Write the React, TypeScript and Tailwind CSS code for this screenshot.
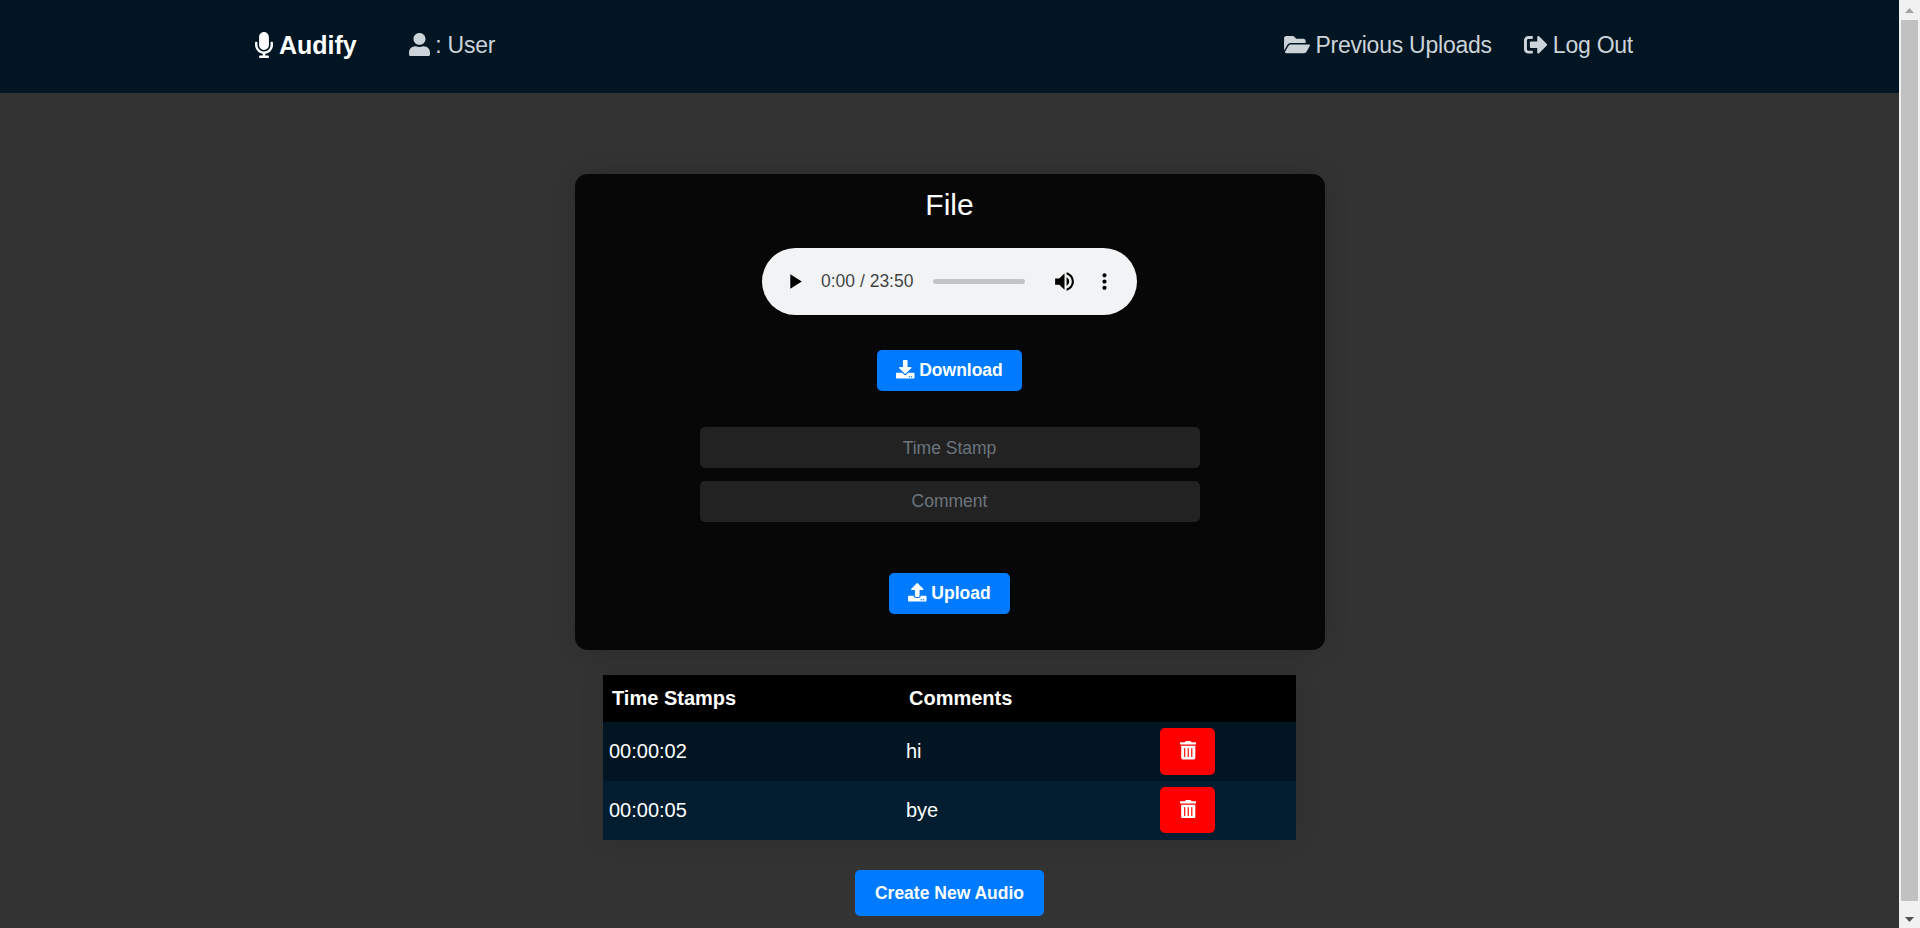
import type { ReactNode } from "react";
import {
  FaDownload,
  FaFolderOpen,
  FaMicrophone,
  FaSignOutAlt,
  FaTrashAlt,
  FaUpload,
  FaUser,
} from "react-icons/fa";

const rows = [
  { time: "00:00:02", comment: "hi", tone: "bg-[#011522]", button: "h-[47px]" },
  { time: "00:00:05", comment: "bye", tone: "bg-[#011d2f]", button: "mb-px h-[46px]" },
];

function Header() {
  return (
    <header className="flex h-[93px] shrink-0 items-start bg-[#011522] pt-[28px] pr-[266px] pl-[255px] text-[23px] leading-[34px] tracking-[-0.24px] text-[#ccd3d9]">
      <a className="flex items-center gap-[7px] text-[25px] font-bold tracking-normal text-white">
        <FaMicrophone className="h-[26px] w-[18px] shrink-0" preserveAspectRatio="none" />
        <span className="-ml-[1px]">Audify</span>
      </a>
      <a className="ml-[52.5px] flex items-center gap-[5px]">
        <FaUser className="-mt-px h-[23.5px] w-[21px]" preserveAspectRatio="none" />
        <span>: User</span>
      </a>
      <nav className="ml-auto flex gap-[32px]">
        <a className="flex items-center gap-[5px]">
          <FaFolderOpen className="-mt-[2px] h-[23px] w-[26px]" />
          <span>Previous Uploads</span>
        </a>
        <a className="flex items-center gap-[5.500px]">
          <FaSignOutAlt className="-mt-px size-[23.500px]" />
          <span>Log Out</span>
        </a>
      </nav>
    </header>
  );
}

function AudioPlayer() {
  return (
    <div className="mt-[30px] flex h-[67px] w-[375px] items-center rounded-[34px] bg-[#f1f3f4] pl-[20px] text-black">
      <svg viewBox="0 0 24 24" className="size-[25px] shrink-0 fill-current">
        <path d="M8 5v14l11-7z" />
      </svg>
      <span className="mb-[2px] ml-[14px] w-[92px] shrink-0 text-[17.5px] leading-[20px] whitespace-nowrap text-black/75">
        0:00 / 23:50
      </span>
      <div className="ml-[20px] h-[5px] w-[92px] shrink-0 rounded-full bg-[#c2c3c4]" />
      <svg viewBox="0 0 24 24" className="ml-[27px] size-[25px] shrink-0 fill-current">
        <path d="M3 9v6h4l5 5V4L7 9H3zm13.500 3c0-1.770-1.020-3.290-2.500-4.030v8.050c1.480-.73 2.500-2.250 2.500-4.020zM14 3.230v2.060c2.890.86 5 3.540 5 6.710s-2.110 5.850-5 6.710v2.060c4.010-.91 7-4.490 7-8.770s-2.990-7.860-7-8.770z" />
      </svg>
      <svg viewBox="0 0 24 24" className="ml-[15px] size-[25px] shrink-0 fill-current">
        <path d="M12 8c1.100 0 2-.9 2-2s-.9-2-2-2-2 .9-2 2 .9 2 2 2zm0 2c-1.100 0-2 .9-2 2s.9 2 2 2 2-.9 2-2-.9-2-2-2zm0 6c-1.100 0-2 .9-2 2s.9 2 2 2 2-.9 2-2-.9-2-2-2z" />
      </svg>
    </div>
  );
}

function Button({ className, children }: { className: string; children: ReactNode }) {
  return (
    <button
      className={`flex items-center justify-center gap-[4.500px] rounded-[5px] bg-[#007bff] text-[17.5px] font-bold text-white ${className}`}
    >
      {children}
    </button>
  );
}

function Field({ label, className }: { label: string; className: string }) {
  return (
    <input
      placeholder={label}
      className={`h-[41px] w-[500px] rounded-[5px] bg-[#222] text-center text-[17.5px] text-white placeholder:text-[#6c757d] placeholder:opacity-100 ${className}`}
    />
  );
}

function Scrollbar() {
  return (
    <div className="flex w-[21px] shrink-0 flex-col items-center bg-[#f1f1f1]">
      <div className="flex h-[20px] items-center justify-center">
        <svg viewBox="0 0 9 5" className="h-[5px] w-[9px] fill-[#a3a3a3]">
          <path d="M0 5L4.500 0L9 5z" />
        </svg>
      </div>
      <div className="h-[881px] w-[17px] bg-[#c1c1c1]" />
      <div className="flex flex-1 items-center justify-center pt-[10px]">
        <svg viewBox="0 0 9 5" className="h-[5px] w-[9px] fill-[#505050]">
          <path d="M0 0L4.500 5L9 0z" />
        </svg>
      </div>
    </div>
  );
}

export default function App() {
  return (
    <div className="flex h-[928px] w-full overflow-hidden bg-[#333] font-['Liberation_Sans',Arial,sans-serif]">
      <div className="flex flex-1 flex-col">
        <Header />
        <main className="flex flex-col items-center">
          <section className="mt-[81px] flex h-[476px] w-[750px] flex-col items-center rounded-[12.5px] bg-[#070707] shadow-[0_0_25px_rgba(0,0,0,0.15)]">
            <h1 className="mt-[13px] text-[30px] leading-[36px] text-white">File</h1>
            <div className="-mt-[5px] flex flex-col items-center">
              <AudioPlayer />
              <Button className="mt-[35px] h-[41px] w-[145px]">
                <FaDownload className="-mt-[2px] size-[18.500px]" />
                Download
              </Button>
              <Field label="Time Stamp" className="mt-[36px] pt-[2px]" />
              <Field label="Comment" className="mt-[13px]" />
              <Button className="mt-[51px] h-[41px] w-[121px]">
                <FaUpload className="-mt-[2px] size-[18.500px]" />
                Upload
              </Button>
            </div>
          </section>

          <table className="mt-[25px] w-[693px] table-fixed border-collapse text-left text-[20px] leading-[30px] text-white shadow-[0_0_25px_rgba(0,0,0,0.1)]">
            <colgroup>
              <col className="w-[297px]" />
              <col className="w-[254px]" />
              <col className="w-[142px]" />
            </colgroup>
            <thead>
              <tr className="h-[47px] bg-black">
                <th className="p-0 pb-[2px] pl-[9px]">Time Stamps</th>
                <th className="p-0 pb-[2px] pl-[9px]">Comments</th>
                <th className="p-0" />
              </tr>
            </thead>
            <tbody>
              {rows.map((row) => (
                <tr key={row.time} className={`h-[59px] ${row.tone}`}>
                  <td className="p-0 pb-[2px] pl-[6px]">{row.time}</td>
                  <td className="p-0 pb-[2px] pl-[6px]">{row.comment}</td>
                  <td className="p-0 pl-[6px]">
                    <button
                      className={`flex w-[55px] items-center justify-center rounded-[5px] bg-[#f00] text-white ${row.button}`}
                    >
                      <FaTrashAlt
                        className="-mt-[2px] ml-px h-[18.500px] w-[16.500px]"
                        preserveAspectRatio="none"
                      />
                    </button>
                  </td>
                </tr>
              ))}
            </tbody>
          </table>

          <Button className="mt-[30px] h-[46px] w-[189px]">Create New Audio</Button>
        </main>
      </div>
      <Scrollbar />
    </div>
  );
}
